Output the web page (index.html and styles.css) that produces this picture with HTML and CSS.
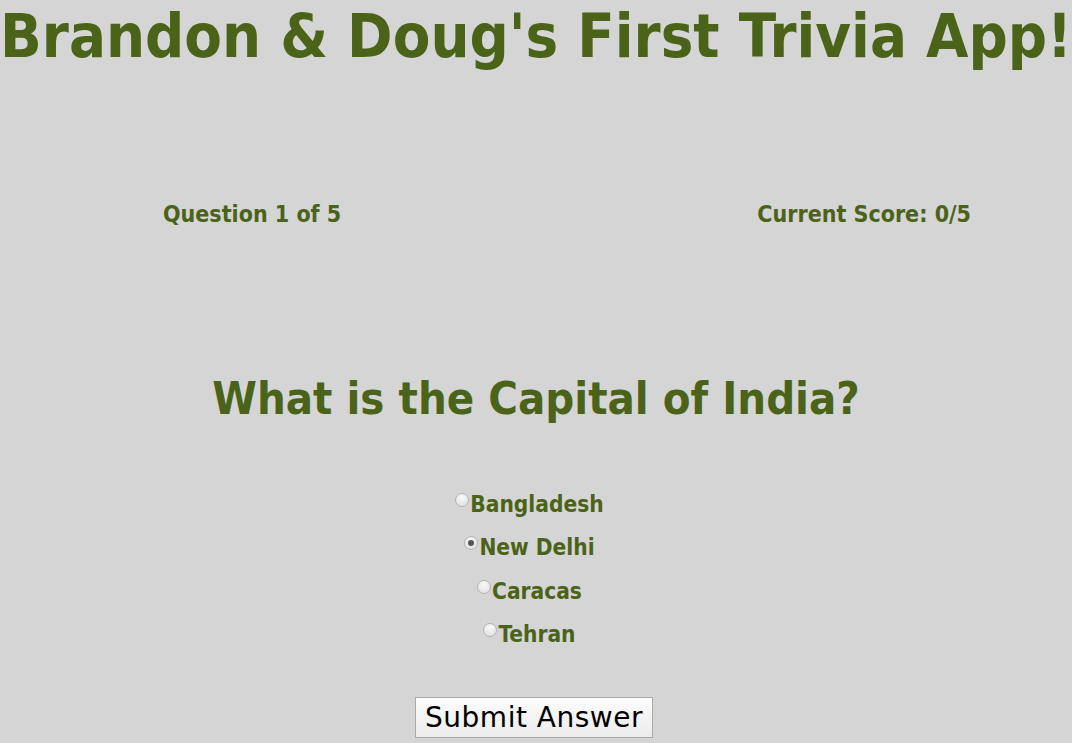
FILE: index.html
```html
<!DOCTYPE html>
<html>
<head>
<meta charset="utf-8">
<link rel="stylesheet" href="styles.css">
</head>
<body>
<h1 class="title">Brandon &amp; Doug's First Trivia App!</h1>
<div class="status">
  <div class="status-item">Question 1 of 5</div>
  <div class="status-item">Current Score: 0/5</div>
</div>
<h2 class="question">What is the Capital of India?</h2>
<form class="answers">
  <label class="answer"><input type="radio" name="a">Bangladesh</label>
  <label class="answer"><input type="radio" name="a" checked>New Delhi</label>
  <label class="answer"><input type="radio" name="a">Caracas</label>
  <label class="answer"><input type="radio" name="a">Tehran</label>
  <div class="submit-row"><button type="button" class="submit">Submit Answer</button></div>
</form>
</body>
</html>
```
FILE: styles.css
```css
html, body {
  margin: 0;
  padding: 0;
  background: #d5d5d5;
  font-family: "DejaVu Sans Condensed", "DejaVu Sans", sans-serif;
  font-stretch: condensed;
  color: #4b6319;
  overflow: hidden;
}
.title {
  margin: 0;
  padding-top: 1px;
  font-size: 61px;
  font-weight: bold;
  text-align: center;
  white-space: nowrap;
  line-height: 70px;
}
.status {
  display: flex;
  justify-content: space-between;
  padding: 0 101px 0 163px;
  margin-top: 130px;
  font-size: 23px;
  font-weight: bold;
}
.question {
  margin: 142px 0 0;
  text-align: center;
  font-size: 45px;
  font-weight: bold;
  line-height: 60px;
}
.answers {
  display: flex;
  flex-direction: column;
  align-items: center;
  margin-top: 54px;
}
.answer {
  font-size: 22.5px;
  font-weight: bold;
  line-height: 43.3px;
  display: flex;
  align-items: flex-start;
  margin-right: 13px;
}
.answer input {
  appearance: none;
  -webkit-appearance: none;
  margin: 10px 1px 0 0;
  width: 14px;
  height: 14px;
  border-radius: 50%;
  border: 1px solid #b4b4b4;
  background: radial-gradient(circle at 50% 30%, #fafafa, #dcdcdc);
  position: relative;
}
.answer input:checked::after {
  content: "";
  position: absolute;
  left: 3px;
  top: 3px;
  width: 6px;
  height: 6px;
  border-radius: 50%;
  background: #555;
}
.submit-row {
  margin-top: 41px;
  margin-right: 4px;
}
.submit {
  font-family: "DejaVu Sans", sans-serif;
  font-stretch: normal;
  font-size: 28px;
  letter-spacing: 0.5px;
  color: #000;
  background: linear-gradient(#fcfcfc, #ececec);
  border: 1px solid #a9a9a9;
  padding: 0 9px;
  height: 41px;
  line-height: 39px;
}
```
